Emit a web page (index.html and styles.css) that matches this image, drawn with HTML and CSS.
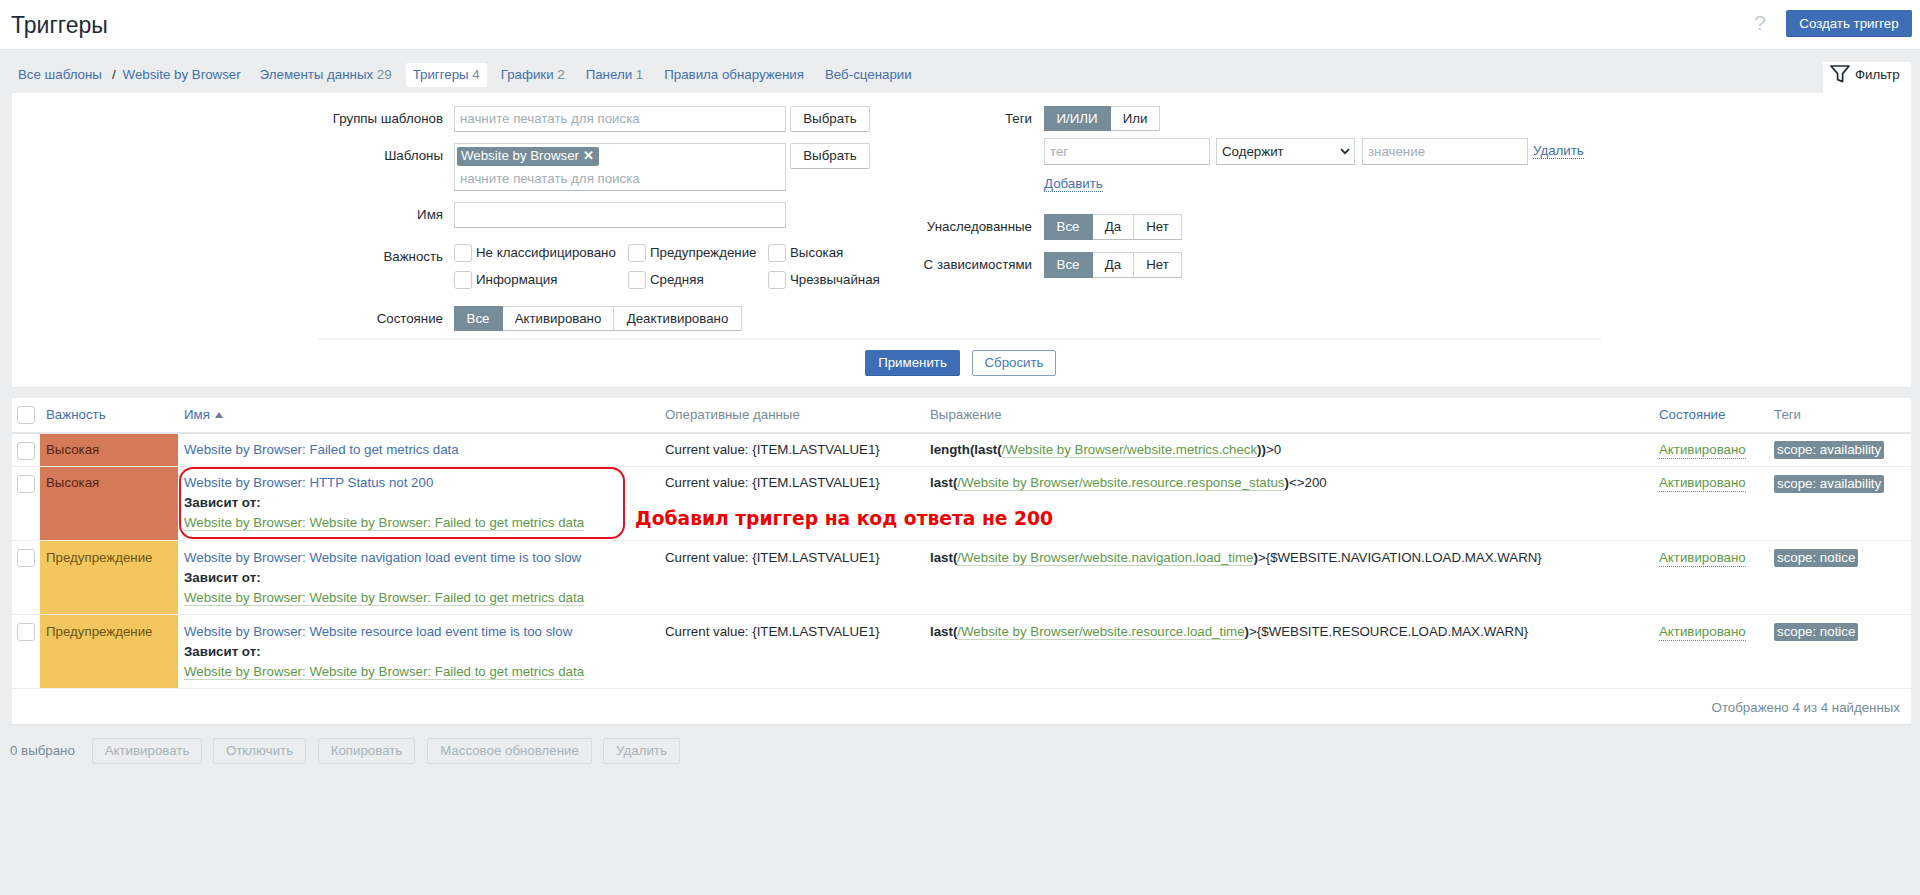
FILE: index.html
```html
<!DOCTYPE html>
<html lang="ru">
<head>
<meta charset="utf-8">
<title>Триггеры</title>
<link rel="stylesheet" href="styles.css">
</head>
<body>
<header class="topbar">
  <h1 class="title">Триггеры</h1>
  <span class="help">?</span>
  <button class="btn btn-primary btn-create">Создать триггер</button>
</header>

<nav class="tabs">
  <a class="tab">Все шаблоны</a><span class="crumb-sep">/</span><a class="tab tab-crumb">Website by Browser</a>
  <a class="tab">Элементы данных <span class="count">29</span></a>
  <a class="tab tab-active">Триггеры <span class="count">4</span></a>
  <a class="tab">Графики <span class="count">2</span></a>
  <a class="tab">Панели <span class="count">1</span></a>
  <a class="tab">Правила обнаружения</a>
  <a class="tab">Веб-сценарии</a>
  <div class="filter-tab">
    <svg class="filter-icon" width="20" height="18" viewBox="0 0 20 18"><path d="M1 1H19L12.6 8.6V16.6L7.6 14.6V8.6Z" fill="none" stroke="#1f2c33" stroke-width="1.7" stroke-linejoin="round"/></svg>
    <span>Фильтр</span>
  </div>
</nav>

<section class="filter">
  <div class="filter-cols">
    <div class="fcol fcol-left">
      <div class="frow">
        <label class="flabel">Группы шаблонов</label>
        <div class="input input-wide placeholder">начните печатать для поиска</div>
        <button class="btn btn-plain">Выбрать</button>
      </div>
      <div class="frow frow-tall">
        <label class="flabel">Шаблоны</label>
        <div class="input input-wide multiselect">
          <span class="chip">Website by Browser <span class="chip-x">✕</span></span>
          <span class="placeholder ms-placeholder">начните печатать для поиска</span>
        </div>
        <button class="btn btn-plain">Выбрать</button>
      </div>
      <div class="frow">
        <label class="flabel">Имя</label>
        <div class="input input-wide"></div>
      </div>
      <div class="frow frow-sev">
        <label class="flabel">Важность</label>
        <div class="sev-grid">
          <label class="check"><span class="box"></span>Не классифицировано</label>
          <label class="check"><span class="box"></span>Предупреждение</label>
          <label class="check"><span class="box"></span>Высокая</label>
          <label class="check"><span class="box"></span>Информация</label>
          <label class="check"><span class="box"></span>Средняя</label>
          <label class="check"><span class="box"></span>Чрезвычайная</label>
        </div>
      </div>
      <div class="frow frow-state">
        <label class="flabel">Состояние</label>
        <div class="seg"><span class="seg-item seg-on seg-all">Все</span><span class="seg-item seg-act">Активировано</span><span class="seg-item seg-deact">Деактивировано</span></div>
      </div>
    </div>
    <div class="fcol fcol-right">
      <div class="frow frow-r">
        <label class="flabel flabel-r">Теги</label>
        <div class="seg"><span class="seg-item seg-on seg-andor">И/ИЛИ</span><span class="seg-item seg-or">Или</span></div>
      </div>
      <div class="frow frow-r frow-tag">
        <span class="flabel flabel-r"></span>
        <div class="input input-tag placeholder">тег</div>
        <div class="input select">Содержит<svg class="chev" width="10" height="7" viewBox="0 0 10 7"><path d="M1 1.2L5 5.2L9 1.2" fill="none" stroke="#1f2c33" stroke-width="1.8"/></svg></div>
        <div class="input input-tag input-val placeholder">значение</div>
        <a class="dash-link remove">Удалить</a>
      </div>
      <div class="frow frow-r frow-add">
        <span class="flabel flabel-r"></span>
        <a class="dash-link">Добавить</a>
      </div>
      <div class="frow frow-r frow-inh">
        <label class="flabel flabel-r">Унаследованные</label>
        <div class="seg seg-tall"><span class="seg-item seg-on seg-all">Все</span><span class="seg-item seg-yes">Да</span><span class="seg-item seg-no">Нет</span></div>
      </div>
      <div class="frow frow-r frow-dep">
        <label class="flabel flabel-r">С зависимостями</label>
        <div class="seg seg-tall"><span class="seg-item seg-on seg-all">Все</span><span class="seg-item seg-yes">Да</span><span class="seg-item seg-no">Нет</span></div>
      </div>
    </div>
  </div>
  <div class="filter-actions">
    <button class="btn btn-primary btn-apply">Применить</button>
    <button class="btn btn-outline btn-reset">Сбросить</button>
  </div>
</section>

<section class="list">
  <table class="triggers">
    <colgroup>
      <col class="c-check"><col class="c-sev"><col class="c-name"><col class="c-op"><col class="c-exp"><col class="c-state"><col class="c-tags">
    </colgroup>
    <thead>
      <tr>
        <th class="td-check"><span class="box"></span></th>
        <th class="th-link">Важность</th>
        <th class="th-link">Имя <span class="sort"></span></th>
        <th>Оперативные данные</th>
        <th>Выражение</th>
        <th class="th-link">Состояние</th>
        <th>Теги</th>
      </tr>
    </thead>
    <tbody>
      <tr class="row-short">
        <td class="td-check"><span class="box"></span></td>
        <td class="sev sev-high">Высокая</td>
        <td><a class="link">Website by Browser: Failed to get metrics data</a></td>
        <td>Current value: {ITEM.LASTVALUE1}</td>
        <td><b>length(last(</b><a class="green">/Website by Browser/website.metrics.check</a><b>))</b>&gt;0</td>
        <td><a class="status">Активировано</a></td>
        <td><span class="tag">scope: availability</span></td>
      </tr>
      <tr class="row-tight">
        <td class="td-check"><span class="box"></span></td>
        <td class="sev sev-high">Высокая</td>
        <td><a class="link">Website by Browser: HTTP Status not 200</a><div class="dep">Зависит от:</div><a class="green">Website by Browser: Website by Browser: Failed to get metrics data</a></td>
        <td>Current value: {ITEM.LASTVALUE1}</td>
        <td><b>last(</b><a class="green">/Website by Browser/website.resource.response_status</a><b>)</b>&lt;&gt;200</td>
        <td><a class="status">Активировано</a></td>
        <td><span class="tag">scope: availability</span></td>
      </tr>
      <tr>
        <td class="td-check"><span class="box"></span></td>
        <td class="sev sev-warn">Предупреждение</td>
        <td><a class="link">Website by Browser: Website navigation load event time is too slow</a><div class="dep">Зависит от:</div><a class="green">Website by Browser: Website by Browser: Failed to get metrics data</a></td>
        <td>Current value: {ITEM.LASTVALUE1}</td>
        <td><b>last(</b><a class="green">/Website by Browser/website.navigation.load_time</a><b>)</b>&gt;{$WEBSITE.NAVIGATION.LOAD.MAX.WARN}</td>
        <td><a class="status">Активировано</a></td>
        <td><span class="tag">scope: notice</span></td>
      </tr>
      <tr>
        <td class="td-check"><span class="box"></span></td>
        <td class="sev sev-warn">Предупреждение</td>
        <td><a class="link">Website by Browser: Website resource load event time is too slow</a><div class="dep">Зависит от:</div><a class="green">Website by Browser: Website by Browser: Failed to get metrics data</a></td>
        <td>Current value: {ITEM.LASTVALUE1}</td>
        <td><b>last(</b><a class="green">/Website by Browser/website.resource.load_time</a><b>)</b>&gt;{$WEBSITE.RESOURCE.LOAD.MAX.WARN}</td>
        <td><a class="status">Активировано</a></td>
        <td><span class="tag">scope: notice</span></td>
      </tr>
    </tbody>
  </table>
  <div class="list-foot">Отображено 4 из 4 найденных</div>
  <div class="annot-box"></div>
  <div class="annot-text">Добавил триггер на код ответа не 200</div>
</section>

<footer class="actions">
  <span class="selected">0 выбрано</span>
  <button class="btn btn-disabled a1">Активировать</button>
  <button class="btn btn-disabled a2">Отключить</button>
  <button class="btn btn-disabled a3">Копировать</button>
  <button class="btn btn-disabled a4">Массовое обновление</button>
  <button class="btn btn-disabled a5">Удалить</button>
</footer>
</body>
</html>
```

FILE: styles.css
```css
* { box-sizing: border-box; }
html, body { margin: 0; padding: 0; }
body {
  background: #ebedee;
  color: #1f2c33;
  font: 13.3px/16px "Liberation Sans", Arial, sans-serif;
  height: 895px;
  overflow: hidden;
}
a { text-decoration: none; }

.topbar {
  height: 50px;
  background: #fff;
  border-bottom: 1px solid #e3e6e8;
  display: flex;
  align-items: flex-start;
  padding: 10px 8px 0 11px;
}
.title { margin: 0; font-weight: 400; font-size: 23px; line-height: 30px; color: #1f2c33; }
.help { margin-left: auto; margin-right: 20px; font-size: 21px; line-height: 26px; color: #c3cbcf; }
.btn {
  font: 13.3px/16px "Liberation Sans", Arial, sans-serif;
  height: 26px;
  border-radius: 2px;
  padding: 0;
  cursor: default;
}
.btn-primary { background: #3e6eb6; border: 1px solid #3e6eb6; border-bottom-color: #35609f; color: #fff; }
.btn-create { width: 126px; height: 27px; }
.btn-plain { width: 80px; margin-left: 4px; flex: none; background: #fff; border: 1px solid #cfd5d9; border-bottom-color: #b9c1c6; color: #1f2c33; }
.btn-outline { background: #fff; border: 1px solid #7f9fc9; color: #4a79b8; }

.tabs {
  height: 43px;
  display: flex;
  align-items: flex-end;
  gap: 7px;
  padding: 0 9px 0 11px;
}
.tab { color: #4470b0; height: 24px; line-height: 24px; padding: 0 7px; margin-bottom: 6px; border-radius: 2px; white-space: nowrap; }
.tab-crumb { margin-left: -7px; margin-right: -2px; }
.crumb-sep { color: #1f2c33; height: 24px; line-height: 24px; margin: 0 0 6px -4px; }
.tab-active { background: #fff; color: #4470b0; }
.count { color: #768d99; }
.filter-tab {
  margin-left: auto;
  width: 88px;
  height: 31px;
  background: #fff;
  display: flex;
  align-items: flex-start;
  gap: 5px;
  padding: 3px 0 0 7px;
  line-height: 18px;
}
.filter-tab span { padding-top: 1px; }

.filter { margin: 0 9px 0 12px; height: 295px; background: #fff; border-bottom: 1px solid #e3e6e8; padding-top: 13px; }
.filter-cols { display: flex; height: 232px; }
.fcol { display: flex; flex-direction: column; }
.fcol-left { width: 870px; }
.frow { display: flex; align-items: flex-start; height: 26px; margin-bottom: 11px; }
.frow-tall { height: 48px; }
.frow-sev { height: 45px; margin-top: 5px; margin-bottom: 17px; }
.frow-state { height: 25px; margin-bottom: 0; }
.flabel { width: 431px; margin-right: 11px; text-align: right; line-height: 26px; flex: none; }
.flabel-r { width: 150px; margin-right: 12px; }
.input {
  height: 26px;
  background: #fff;
  border: 1px solid #cfd5d9;
  border-bottom-color: #b9c1c6;
  line-height: 24px;
  padding: 0 5px;
  flex: none;
}
.input-wide { width: 332px; }
.placeholder { color: #a3aeb4; }
.multiselect { height: 48px; padding: 3px 2px; line-height: 16px; }
.chip {
  display: block;
  width: 142px;
  height: 19px;
  line-height: 18px;
  padding: 0 4px;
  background: #768d99;
  color: #fff;
  border-radius: 2px;
  white-space: nowrap;
}
.chip-x { font-weight: 700; font-size: 13px; }
.ms-placeholder { display: block; padding: 5px 3px 0; }

.sev-grid { display: grid; grid-template-columns: 174px 140px auto; grid-auto-rows: 27px; }
.check { display: flex; align-items: flex-start; line-height: 18px; white-space: nowrap; }
.box {
  display: block;
  width: 18px;
  height: 18px;
  flex: none;
  background: #fff;
  border: 1px solid #c9d0d4;
  border-radius: 3px;
}
.check .box { margin-right: 4px; }

.seg { display: flex; height: 25px; border-radius: 2px; }
.seg-tall { height: 26px; }
.seg-item {
  display: block;
  text-align: center;
  line-height: 23px;
  background: #fff;
  border: 1px solid #cfd5d9;
  border-left: 0;
  border-bottom-color: #b9c1c6;
}
.seg-on { background: #768d99; border-color: #768d99; color: #fff; }
.seg-all { width: 49px; }
.seg-act { width: 111px; }
.seg-deact { width: 128px; }
.seg-andor { width: 67px; }
.seg-or { width: 49px; }
.seg-yes { width: 41px; }
.seg-no { width: 48px; }
.seg-tall .seg-item { line-height: 24px; }

.fcol-right .frow-r { margin-bottom: 6px; }
.frow-tag { height: 27px; }
.input-tag { width: 166px; height: 27px; line-height: 25px; }
.input-val { margin-left: 7px; }
.select { width: 139px; height: 27px; line-height: 25px; margin-left: 6px; display: flex; align-items: center; justify-content: space-between; padding-right: 4px; }
.dash-link { color: #4470b0; border-bottom: 1px dotted #4470b0; line-height: 15px; }
.remove { margin: 5px 0 0 5px; }
.fcol-right .frow-add { height: 20px; margin-top: 1px; margin-bottom: 22px; }
.frow-add .dash-link { margin-top: 4px; }
.fcol-right .frow-inh { margin-bottom: 12px; }

.filter-actions { display: flex; justify-content: flex-start; gap: 12px; border-top: 2px solid #f1f3f4; margin: 0 310px 0 306px; padding: 10px 0 0 547px; }
.btn-apply { width: 95px; height: 26px; }
.btn-reset { width: 84px; height: 26px; }

.list { position: relative; margin: 10px 9px 0 12px; height: 327px; background: #fff; border-bottom: 1px solid #e3e6e8; }
.triggers { width: 1899px; table-layout: fixed; border-collapse: collapse; }
.c-check { width: 28px; }
.c-sev { width: 138px; }
.c-name { width: 481px; }
.c-op { width: 265px; }
.c-exp { width: 729px; }
.c-state { width: 115px; }
.c-tags { width: 143px; }
.triggers th {
  height: 35px;
  padding: 0 6px;
  text-align: left;
  font-weight: 400;
  color: #768d99;
  border-bottom: 2px solid #e3e6e8;
}
.triggers th.th-link { color: #4470b0; }
.triggers td {
  height: 74px;
  padding: 7px 6px 0;
  vertical-align: top;
  line-height: 20px;
  border-bottom: 1px solid #ebedee;
  white-space: nowrap;
}
.triggers .row-short td { height: 33px; padding-top: 6px; }
.triggers .row-tight td { padding-top: 6px; }
.triggers .td-check, .triggers .row-short .td-check, .triggers .row-tight .td-check { padding: 8px 0 0 5px; }
.triggers th.td-check { padding: 0 0 0 5px; }
.sort { display: inline-block; width: 0; height: 0; border: 4.5px solid transparent; border-top: 0; border-bottom: 6px solid #6f7f88; margin-left: 1px; vertical-align: 1px; }
.triggers td.sev { border-bottom-color: #f2f2f2; }
.sev-high { background: #d47a59; color: #5a2410; }
.sev-warn { background: #f3c75d; color: #6e5514; }
.link { color: #4470b0; }
.green { color: #5f9a4b; border-bottom: 1px solid #c8d9c2; }
.status { color: #5f9a4b; border-bottom: 1px dotted #5f9a4b; padding-bottom: 1px; }
.dep { font-weight: 700; color: #1f2c33; }
.tag {
  display: inline-block;
  height: 18px;
  line-height: 18px;
  padding: 0 3px;
  background: #768d99;
  color: #fff;
  border-radius: 2px;
  vertical-align: top;
  margin-top: 1px;
}
.row-tight .tag { margin-top: 2px; }
.list-foot { height: 36px; line-height: 38px; text-align: right; padding-right: 11px; color: #768d99; }
.annot-box { position: absolute; left: 167px; top: 69px; width: 446px; height: 72px; border: 2px solid #e8101c; border-radius: 14px; }
.annot-text { position: absolute; left: 623px; top: 111px; font: 700 18.7px/20px "DejaVu Sans", sans-serif; color: #ee0000; white-space: nowrap; }

.actions { display: flex; align-items: flex-start; padding: 13px 0 0 10px; }
.selected { line-height: 26px; color: #768d99; width: 82px; flex: none; }
.btn-disabled { background: #ebedee; border: 1px solid #d8dcdf; color: #a9b4ba; margin-right: 11px; flex: none; }
.a1 { width: 110px; }
.a2 { width: 93px; margin-right: 12px; }
.a3 { width: 97px; margin-right: 12px; }
.a4 { width: 165px; }
.a5 { width: 77px; }
```
